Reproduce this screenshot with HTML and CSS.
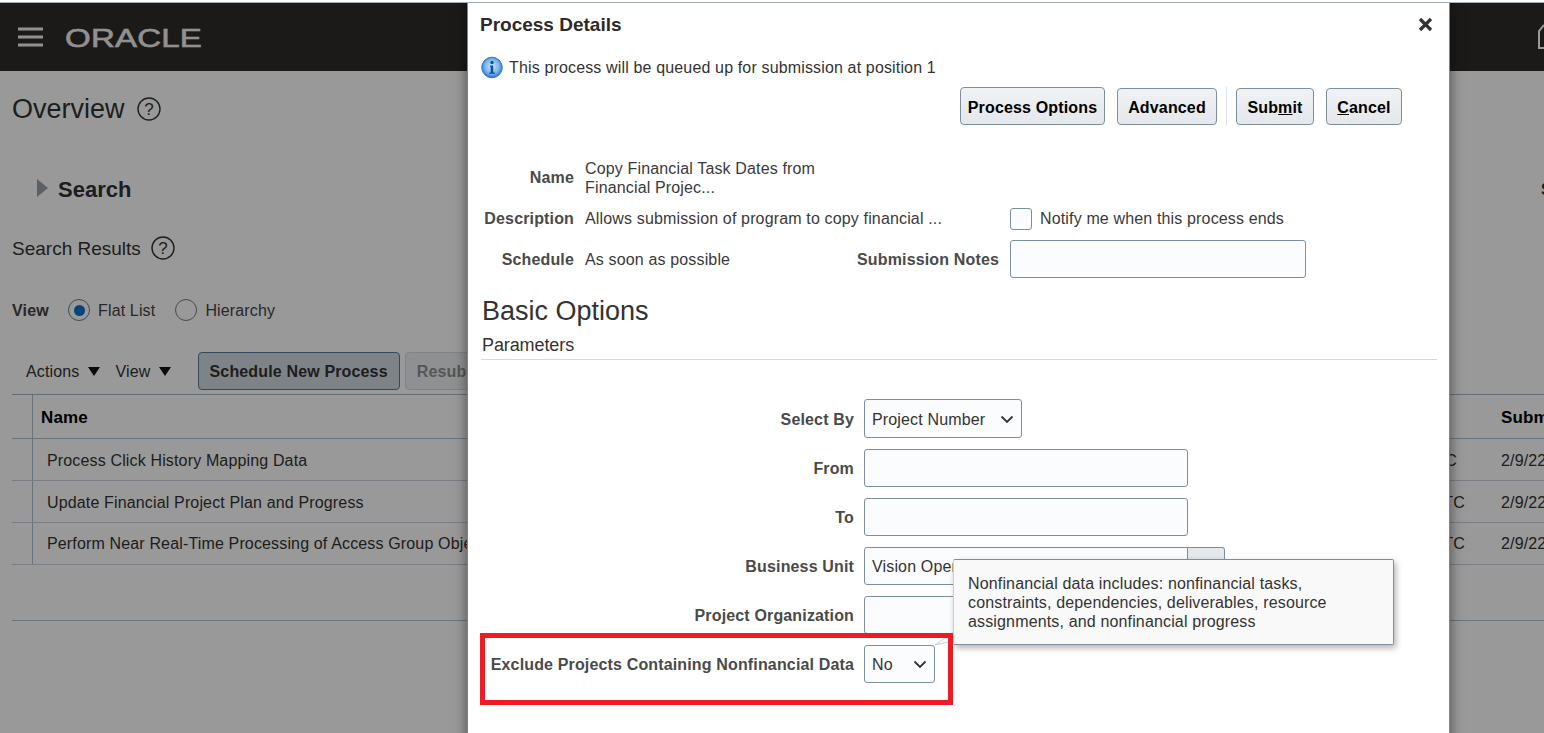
FILE: index.html
```html
<!DOCTYPE html>
<html lang="en">
<head>
<meta charset="utf-8">
<title>Process Details</title>
<link rel="stylesheet" href="styles.css">
</head>
<body>
<div class="topline"></div>
<div class="app">
  <header class="header">
    <svg class="burger" width="25" height="20" viewBox="0 0 25 20"><path d="M0 2h25M0 10h25M0 18h25" stroke="#f2f2f2" stroke-width="3"/></svg>
    <svg class="logo" width="138" height="22" viewBox="0 0 138 22"><text x="0" y="20.5" font-family="Liberation Sans" font-size="26" fill="#f2f2f2" stroke="#f2f2f2" stroke-width=".6" textLength="137" lengthAdjust="spacingAndGlyphs">ORACLE</text></svg>
    <svg class="home" width="6" height="26" viewBox="0 0 6 26"><path d="M6 1 1 7v17h5" fill="none" stroke="#fff" stroke-width="2"/></svg>
  </header>
  <main class="main">
    <div class="title-row"><h1 class="page-title">Overview</h1>
      <svg class="help" width="24" height="24" viewBox="0 0 24 24"><circle cx="12" cy="12" r="11" fill="none" stroke="#333" stroke-width="1.4"/><text x="12" y="18" text-anchor="middle" font-family="Liberation Sans" font-size="17" fill="#333">?</text></svg>
    </div>
    <div class="search-row">
      <span class="tri-right"></span><span class="search-label">Search</span>
      <span class="saved">Saved Search</span>
    </div>
    <div class="results-row"><h2 class="results-title">Search Results</h2>
      <svg class="help" width="24" height="24" viewBox="0 0 24 24"><circle cx="12" cy="12" r="11" fill="none" stroke="#333" stroke-width="1.4"/><text x="12" y="18" text-anchor="middle" font-family="Liberation Sans" font-size="17" fill="#333">?</text></svg>
    </div>
    <div class="view-row">
      <span class="view-label">View</span>
      <span class="radio on"><span class="dot"></span></span><span class="radio-text">Flat List</span>
      <span class="radio second"></span><span class="radio-text">Hierarchy</span>
    </div>
    <div class="toolbar">
      <span class="menu">Actions</span><span class="tri-down"></span>
      <span class="menu view-menu">View</span><span class="tri-down"></span>
      <span class="tbtn">Schedule New Process</span>
      <span class="tbtn disabled">Resubmit</span>
    </div>
    <div class="table">
      <div class="row head"><div class="sel"></div><div class="cell">Name</div><div class="cell time"></div><div class="cell">Submission Time</div></div>
      <div class="row"><div class="sel"></div><div class="cell name">Process Click History Mapping Data</div><div class="cell time narrow">UTC</div><div class="cell">2/9/22 10:14 AM</div></div>
      <div class="row"><div class="sel"></div><div class="cell name">Update Financial Project Plan and Progress</div><div class="cell time">UTC</div><div class="cell">2/9/22 10:12 AM</div></div>
      <div class="row"><div class="sel"></div><div class="cell name">Perform Near Real-Time Processing of Access Group Objects</div><div class="cell time">UTC</div><div class="cell">2/9/22 10:10 AM</div></div>
    </div>
    <div class="table-end"></div>
  </main>
  <div class="scrim"></div>

  <section class="dialog">
    <div class="dlg-head">
      <h2 class="dlg-title">Process Details</h2>
      <svg class="close" width="15" height="15" viewBox="0 0 15 15"><path d="M2 2l11 11M13 2 2 13" stroke="#333" stroke-width="3.2"/></svg>
    </div>
    <div class="info">
      <svg width="22" height="23" viewBox="0 0 22 23"><defs><radialGradient id="ig" cx="50%" cy="45%" r="55%"><stop offset="0" stop-color="#cfe6fb"/><stop offset=".6" stop-color="#7db8ef"/><stop offset="1" stop-color="#2a74c9"/></radialGradient></defs><circle cx="11" cy="11.5" r="10.3" fill="url(#ig)" stroke="#2f77c6" stroke-width="1"/><circle cx="11" cy="6.5" r="1.7" fill="#12509c"/><path d="M9 9.5h3.2v7H14v1.3H8.4v-1.3h1.3v-5.7H9z" fill="#12509c"/></svg>
      <span>This process will be queued up for submission at position 1</span>
    </div>
    <div class="actions">
      <span class="btn tall">Process Options</span>
      <span class="btn advanced">Advanced</span>
      <span class="sep"></span>
      <span class="btn submit">Sub<u>m</u>it</span>
      <span class="btn cancel"><u>C</u>ancel</span>
    </div>
    <div class="summary">
      <div class="lbl">Name</div><div class="val">Copy Financial Task Dates from<br>Financial Projec...</div><div></div><div></div>
      <div class="lbl">Description</div><div class="val nowrap">Allows submission of program to copy financial ...</div><div></div>
      <div class="notify"><span class="check"></span><span>Notify me when this process ends</span></div>
      <div class="lbl">Schedule</div><div class="val">As soon as possible</div><div class="lbl">Submission Notes</div><div class="field notes"></div>
    </div>
    <h2 class="basic">Basic Options</h2>
    <div class="params-title">Parameters</div>
    <div class="params">
      <div class="lbl first-lbl">Select By</div><div class="field select first"><span>Project Number</span><svg width="14" height="9" viewBox="0 0 14 9"><path d="M1.5 1.5 7 7l5.5-5.5" fill="none" stroke="#333" stroke-width="1.8"/></svg></div>
      <div class="lbl">From</div><div class="field wide"></div>
      <div class="lbl">To</div><div class="field wide"></div>
      <div class="lbl">Business Unit</div><div class="combo"><div class="field wide joined">Vision Operations</div><span class="combo-btn"></span></div>
      <div class="lbl">Project Organization</div><div class="field wide"></div>
      <div class="lbl">Exclude Projects Containing Nonfinancial Data</div><div class="field select small"><span>No</span><svg width="14" height="9" viewBox="0 0 14 9"><path d="M1.5 1.5 7 7l5.5-5.5" fill="none" stroke="#333" stroke-width="1.8"/></svg></div>
    </div>
  </section>

  <div class="tooltip">Nonfinancial data includes: nonfinancial tasks, constraints, dependencies, deliverables, resource assignments, and nonfinancial progress</div>
  <svg class="tail" width="19" height="14" viewBox="0 0 19 14"><path d="M0 13 18 9V0z" fill="#f9f9f9" stroke="#c5d0da" stroke-width="1"/></svg>
  <div class="highlight"></div>
</div>
</body>
</html>
```
FILE: styles.css
```css
* { box-sizing: border-box; }
html, body { margin: 0; height: 100%; overflow: hidden; background: #fff; }
body { font: 16px/19px "Liberation Sans", Arial, sans-serif; color: #333; letter-spacing: .15px; }
h1, h2 { margin: 0; font-weight: normal; letter-spacing: 0; }
.topline { height: 3px; border-bottom: 1px solid #a3adb5; background: #fff; }
.app { position: relative; height: 730px; overflow: hidden; background: #fff; }

.header { height: 68px; background: #2f2c2a; display: flex; align-items: center; padding-left: 18px; }
.burger { flex: none; }
.logo { flex: none; margin-left: 22px; overflow: visible; }
.home { flex: none; margin-left: auto; }

.main { padding-left: 12px; }
.title-row { display: flex; align-items: center; gap: 12px; height: 40px; margin-top: 18px; }
.page-title { font-size: 27px; }
.search-row { display: flex; align-items: center; height: 30px; margin-top: 45px; padding-left: 25px; }
.tri-right { width: 0; height: 0; border-left: 11px solid #98a0a8; border-top: 9px solid transparent; border-bottom: 9px solid transparent; margin-top: -2px; }
.search-label { font-size: 22px; font-weight: bold; margin-left: 10px; letter-spacing: 0; }
.saved { margin-left: auto; width: 3px; white-space: nowrap; font-weight: bold; }
.results-row { display: flex; align-items: center; gap: 10px; height: 30px; margin-top: 29px; }
.results-title { font-size: 19px; }
.view-row { display: flex; align-items: center; height: 24px; margin-top: 35px; }
.view-label { font-weight: bold; color: #444; width: 56px; }
.radio { width: 22px; height: 22px; border-radius: 50%; border: 1px solid #6b7f90; background: #fff; display: flex; align-items: center; justify-content: center; }
.radio.second { margin-left: 20px; }
.dot { width: 11px; height: 11px; border-radius: 50%; background: #0572ce; }
.radio-text { margin-left: 8px; color: #444; }
.toolbar { display: flex; align-items: center; height: 38px; margin-top: 30px; padding-left: 14px; color: #333; }
.view-menu { margin-left: 16px; }
.tri-down { width: 0; height: 0; margin-left: 8px; border-top: 9px solid #111; border-left: 6px solid transparent; border-right: 6px solid transparent; }
.tbtn { height: 38px; display: flex; align-items: center; padding: 0 11px; margin-left: 27px; border: 1px solid #5d7a92; border-radius: 4px; background: #d3dbe1; font-weight: bold; white-space: nowrap; }
.tbtn.disabled { margin-left: 5px; padding: 0 12px 0 11px; color: #8f8f8f; background: #eff1f3; border-color: #d5dbe0; }
.table { margin-top: 4px; border-top: 1px solid #a9b8c6; }
.row { display: grid; grid-template-columns: 21px 1fr 100px 43px; height: 42px; border-bottom: 1px solid #c8d2dc; }
.row.head { height: 44px; border-bottom-color: #b3c0cc; font-size: 17px; font-weight: bold; color: #000; }
.row:not(:last-child) .cell { padding-top: 1px; }
.sel { border-right: 1px solid #b3c0cc; }
.cell { display: flex; align-items: center; overflow: hidden; white-space: nowrap; padding-left: 8px; }
.cell:last-child { padding-left: 0; }
.cell.name { padding-left: 14px; }
.cell.time { justify-content: flex-end; padding: 0 36px 0 0; }
.cell.time.narrow { padding-right: 44px; }
.table-end { margin-top: 55px; height: 1px; background: #b3c0cc; }

.scrim { position: absolute; inset: 0; background: rgba(0, 0, 0, .4); }

.dialog { position: absolute; left: 467px; top: 0; width: 983px; height: 760px; background: #fff; border: 1px solid #74889a; border-top: 0; padding: 0 12px 0 13px; box-shadow: 0 0 12px rgba(0, 0, 0, .5); }
.dlg-head { display: flex; align-items: center; justify-content: space-between; height: 42px; padding-right: 4px; }
.dlg-title { font-size: 19px; font-weight: bold; margin: 1px 0 0 -1px; color: #2d2a28; }
.info { display: flex; align-items: center; gap: 6px; height: 24px; margin-top: 10px; }
.actions { display: flex; align-items: center; justify-content: flex-end; gap: 12px; height: 38px; margin-top: 8px; padding-right: 35px; }
.btn { height: 37px; display: flex; align-items: center; justify-content: center; margin-top: 1px; padding-top: 2px; border: 1px solid #7d8f9e; border-radius: 4px; background: linear-gradient(#f0f2f4, #e4e8ea); font-weight: bold; color: #000; }
.btn.tall { width: 145px; height: 38px; margin-top: 0; }
.btn.advanced { width: 100px; }
.btn.submit { width: 78px; }
.btn.cancel { width: 76px; }
.sep { width: 1px; height: 38px; background: #dfe3e7; margin: 0 -3px 0 -3px; }
.summary { display: grid; grid-template-columns: 93px 261px 142px 1fr; column-gap: 11px; grid-template-rows: 39px 23px 38px; row-gap: 10px; align-items: center; margin-top: 33px; }
.lbl { font-weight: bold; color: #4a4a4a; text-align: right; white-space: nowrap; }
.val { color: #3a3a3a; }
.nowrap { white-space: nowrap; }
.notify { display: flex; align-items: center; gap: 8px; color: #3a3a3a; }
.check { width: 22px; height: 22px; border: 1px solid #7d8f9e; border-radius: 3px; background: #fbfcfe; }
.field { height: 38px; border: 1px solid #7d8f9e; border-radius: 3px; background: #fbfcfe; color: #333; display: flex; align-items: center; padding: 0 7px; white-space: nowrap; overflow: hidden; }
.notes { width: 296px; }
.basic { font-size: 27px; line-height: 30px; margin: 18px 0 0 1px; }
.params-title { font-size: 18px; line-height: 21px; letter-spacing: -.1px; margin: 9px 0 0 0; padding: 0 0 4px 1px; border-bottom: 1px solid #d5d9dd; height: 25px; }
.params { display: grid; grid-template-columns: 373px 1fr; column-gap: 10px; row-gap: 11px; align-items: center; margin-top: 39px; }
.first-lbl { padding-top: 2px; }
.wide { width: 324px; }
.select { justify-content: space-between; padding-right: 7px; }
.select.first { width: 158px; height: 39px; padding-top: 1px; }
.select.small { width: 71px; }
.combo { display: flex; width: 361px; }
.joined { border-radius: 3px 0 0 3px; }
.combo-btn { width: 37px; height: 38px; border: 1px solid #7d8f9e; border-left: 0; border-radius: 0 3px 3px 0; background: #e4e8ea; }

.tooltip { position: absolute; left: 953px; top: 556px; width: 441px; height: 86px; padding: 14px 14px; background: #f9f9f9; border: 1px solid #7d8f9e; border-left-color: #c5d0da; border-radius: 2px; box-shadow: 2px 3px 6px rgba(0, 0, 0, .3); color: #333; }
.tail { position: absolute; left: 935px; top: 629px; }
.highlight { position: absolute; left: 480px; top: 630px; width: 473px; height: 72px; border: 5px solid #ed1c24; }
```
